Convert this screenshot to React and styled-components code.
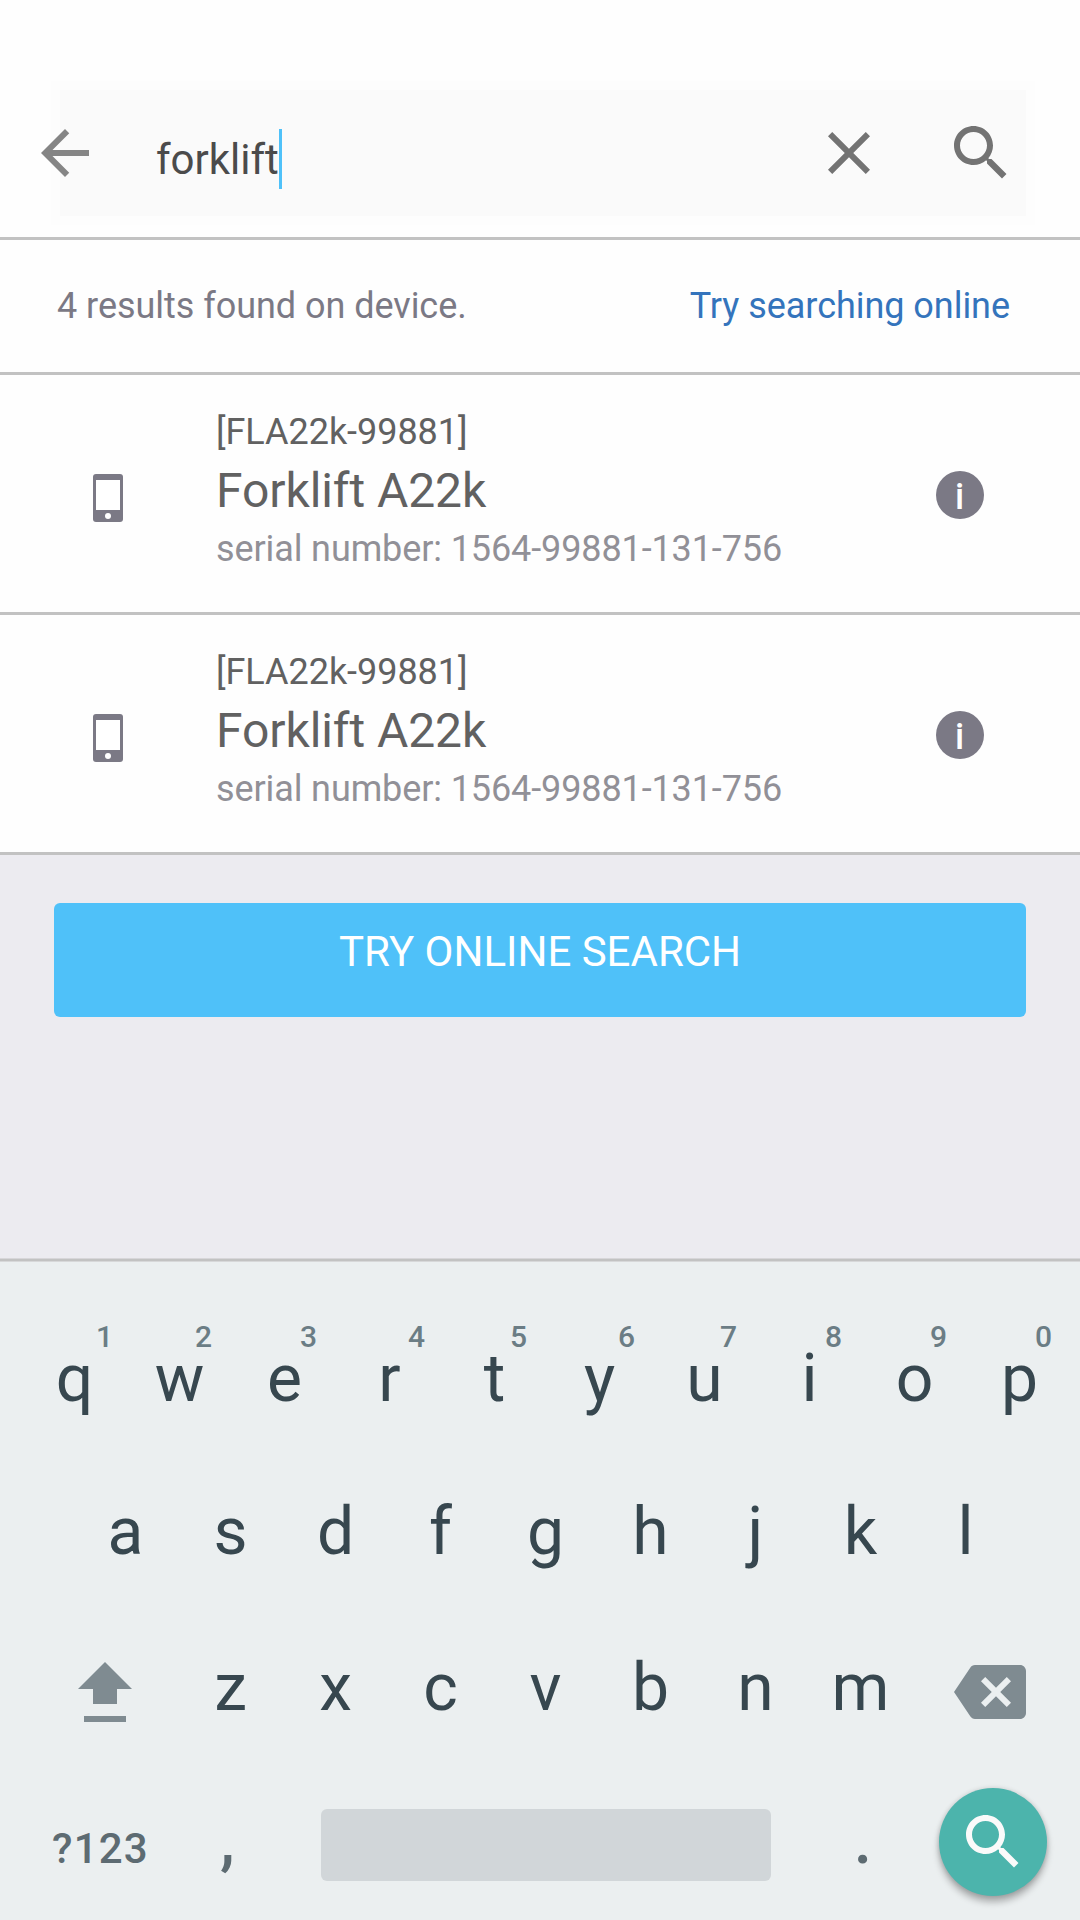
import React from "react";
import styled, { createGlobalStyle } from "styled-components";

const GlobalStyle = createGlobalStyle`
  *, *::before, *::after { box-sizing: border-box; }
  body { margin: 0; background: #fff; }
  button { border: 0; padding: 0; margin: 0; background: none; font: inherit; color: inherit; }
`;

const Screen = styled.main`
  display: flex;
  flex-direction: column;
  width: 1080px;
  height: 1920px;
  overflow: hidden;
  background: #fefefe;
  font-family: Roboto, "Noto Sans", sans-serif;
`;

const Header = styled.header`
  height: 240px;
  padding: 90px 54px 0 60px;
  border-bottom: 3px solid #c2c2c2;
`;

const SearchBar = styled.div`
  display: flex;
  align-items: flex-start;
  height: 126px;
  padding: 27px 9px 0 0;
  background: #fafafa;
  box-shadow: 0 0 0 9px #fdfdfd;
`;

const Icon = styled.svg`
  display: block;
  flex: none;
  width: 72px;
  height: 72px;
  fill: ${(p) => p.$color};
`;

const BackButton = styled.button`
  margin-left: -31px;
`;

const Query = styled.div`
  display: flex;
  flex: 1;
  margin: 12px 0 0 55px;
  font-size: 42px;
  line-height: 61px;
  color: #4b4b4b;
`;

const Caret = styled.span`
  width: 3px;
  height: 60px;
  background: #4fc1f9;
`;

const SearchActions = styled.div`
  display: flex;
  gap: 60px;
`;

const Summary = styled.div`
  display: flex;
  align-items: center;
  justify-content: space-between;
  height: 135px;
  padding: 0 70px 0 57px;
  border-bottom: 3px solid #c2c2c2;
  font-size: 36px;
  line-height: 42px;
  letter-spacing: -0.04px;
  color: #7b7985;
`;

const OnlineLink = styled.a`
  color: #3474bc;
`;

const Result = styled.article`
  display: flex;
  align-items: flex-start;
  height: 240px;
  padding: 36px 96px 0 93px;
  border-bottom: 3px solid #c2c2c2;
`;

const PhoneIcon = styled.svg`
  display: block;
  flex: none;
  width: 30px;
  height: 48px;
  margin-top: 63px;
`;

const ResultText = styled.div`
  display: flex;
  flex: 1;
  flex-direction: column;
  gap: 9px;
  margin-left: 93px;
  font-size: 36px;
  line-height: 42px;
`;

const Code = styled.div`
  letter-spacing: -0.04px;
  color: #616161;
`;

const Title = styled.div`
  font-size: 48px;
  line-height: 57px;
  letter-spacing: -0.08px;
  color: #616161;
`;

const Serial = styled.div`
  letter-spacing: -0.11px;
  color: #919097;
`;

const InfoBadge = styled.button`
  flex: none;
  width: 48px;
  height: 48px;
  margin-top: 60px;
  padding: 4px 1px 0 0;
  border-radius: 50%;
  background: #7b7985;
  color: #fff;
  font-size: 36px;
  font-weight: 500;
  line-height: 42px;
  text-align: center;
`;

const Footer = styled.section`
  height: 403px;
  padding: 48px 54px 0;
  background: #ecebf0;
`;

const OnlineButton = styled.button`
  display: block;
  width: 100%;
  height: 114px;
  padding-bottom: 17px;
  border-radius: 6px;
  background: #4fc1f9;
  color: #fff;
  font-size: 42px;
  line-height: 49px;
`;

const Keyboard = styled.section`
  height: 662px;
  padding-top: 44px;
  background:
    linear-gradient(#d7d6d9 0 1px, #c2c2c2 1px 3px, #d7d8d9 3px 4px) top / 100% 4px no-repeat,
    #ebeff0;
  color: #37474f;
`;

const KeyRow = styled.div`
  display: flex;
  align-items: center;
  height: ${(p) => p.$height}px;
  padding-left: ${(p) => p.$inset}px;
`;

const Key = styled.button`
  position: relative;
  flex: none;
  width: 105px;
  font-size: 66px;
  line-height: 77px;
  text-align: center;
`;

const Hint = styled.span`
  position: absolute;
  top: -21px;
  left: calc(50% + ${(p) => p.$offset}px);
  width: 18px;
  font-size: 30px;
  font-weight: 500;
  line-height: 35px;
  color: #6b7d85;
`;

const ShiftIcon = styled.svg`
  display: block;
  flex: none;
  width: 54px;
  height: 60px;
  margin: 9px 46px 0 0;
  fill: #7f8b91;
`;

const DeleteKey = styled.button`
  margin: 9px 0 0 41px;
`;

const BottomRow = styled.div`
  display: grid;
  grid-template-columns: 174px 147px 450px 168px 108px;
  align-items: start;
  height: 153px;
  color: #5d6b72;
  font-weight: 500;
`;

const SymbolsKey = styled.button`
  padding: 57px 0 0 52px;
  font-size: 42px;
  font-weight: 500;
  line-height: 49px;
  letter-spacing: 1.2px;
  text-align: left;
`;

const PunctuationKey = styled.button`
  padding: 35px ${(p) => p.$right || 0}px 0 ${(p) => p.$left || 0}px;
  font-size: 66px;
  font-weight: 500;
  line-height: 77px;
`;

const SpaceKey = styled.button`
  height: 72px;
  margin-top: 42px;
  border-radius: 6px;
  background: #d1d6d9;
`;

const SearchKey = styled.button`
  display: grid;
  place-items: center;
  width: 108px;
  height: 108px;
  margin-top: 21px;
  border-radius: 50%;
  background: #4cb4ac;
  box-shadow: 0 6px 7px rgba(0, 0, 0, 0.28), 0 0 5px rgba(0, 0, 0, 0.14);
`;

const paths = {
  back: "M20 11H7.83l5.59-5.59L12 4l-8 8 8 8 1.41-1.41L7.83 13H20v-2z",
  close: "M19 6.41L17.59 5 12 10.59 6.41 5 5 6.41 10.59 12 5 17.59 6.41 19 12 13.41 17.59 19 19 17.59 13.41 12z",
  search:
    "M15.5 14h-.79l-.28-.27C15.41 12.59 16 11.11 16 9.5 16 5.91 13.09 3 9.5 3S3 5.91 3 9.5 5.91 16 9.5 16c1.61 0 3.09-.59 4.23-1.57l.27.28v.79l5 4.99L20.49 19l-4.99-5zm-6 0C7.01 14 5 11.99 5 9.5S7.01 5 9.5 5 14 7.01 14 9.5 11.99 14 9.5 14z",
  backspace:
    "M22 3H7c-.69 0-1.23.35-1.59.88L0 12l5.41 8.11c.36.53.9.89 1.59.89h15c1.1 0 2-.9 2-2V5c0-1.1-.9-2-2-2zm-3 12.59L17.59 17 14 13.41 10.41 17 9 15.59 12.59 12 9 8.41 10.41 7 14 10.59 17.59 7 19 8.41 15.41 12 19 15.59z",
};

function Glyph({ name, color }) {
  return (
    <Icon viewBox="0 0 24 24" $color={color} aria-hidden="true">
      <path d={paths[name]} />
    </Icon>
  );
}

const results = [
  { id: 1, code: "[FLA22k-99881]", title: "Forklift A22k", serial: "1564-99881-131-756" },
  { id: 2, code: "[FLA22k-99881]", title: "Forklift A22k", serial: "1564-99881-131-756" },
];

const topKeys = [
  { letter: "q", hint: "1", offset: 21 },
  { letter: "w", hint: "2", offset: 15 },
  { letter: "e", hint: "3", offset: 15 },
  { letter: "r", hint: "4", offset: 18 },
  { letter: "t", hint: "5", offset: 15 },
  { letter: "y", hint: "6", offset: 18 },
  { letter: "u", hint: "7", offset: 15 },
  { letter: "i", hint: "8", offset: 15 },
  { letter: "o", hint: "9", offset: 15 },
  { letter: "p", hint: "0", offset: 15 },
];

function ResultRow({ item }) {
  return (
    <Result>
      <PhoneIcon viewBox="0 0 30 48" aria-hidden="true">
        <rect width="30" height="48" rx="3" fill="#7b7985" />
        <rect x="3" y="6" width="24" height="30" fill="#fff" />
        <circle cx="15" cy="42" r="3" fill="#fff" />
      </PhoneIcon>
      <ResultText>
        <Code>{item.code}</Code>
        <Title>{item.title}</Title>
        <Serial>serial number: {item.serial}</Serial>
      </ResultText>
      <InfoBadge>i</InfoBadge>
    </Result>
  );
}

export default function App() {
  return (
    <>
      <GlobalStyle />
      <Screen>
        <Header>
          <SearchBar>
            <BackButton aria-label="Back">
              <Glyph name="back" color="#858585" />
            </BackButton>
            <Query>
              <span>forklift</span>
              <Caret />
            </Query>
            <SearchActions>
              <Glyph name="close" color="#737373" />
              <Glyph name="search" color="#737373" />
            </SearchActions>
          </SearchBar>
        </Header>
        <Summary>
          <span>4 results found on device.</span>
          <OnlineLink>Try searching online</OnlineLink>
        </Summary>
        {results.map((item) => (
          <ResultRow key={item.id} item={item} />
        ))}
        <Footer>
          <OnlineButton>TRY ONLINE SEARCH</OnlineButton>
        </Footer>
        <Keyboard>
          <KeyRow $height={153} $inset={22}>
            {topKeys.map((k) => (
              <Key key={k.letter}>
                {k.letter}
                <Hint $offset={k.offset}>{k.hint}</Hint>
              </Key>
            ))}
          </KeyRow>
          <KeyRow $height={153} $inset={73}>
            {[..."asdfghjkl"].map((c) => (
              <Key key={c}>{c}</Key>
            ))}
          </KeyRow>
          <KeyRow $height={159} $inset={78}>
            <ShiftIcon viewBox="0 0 54 60" aria-hidden="true">
              <path d="M27 0L54 27H39V42H15V27H0zM6 54H48V60H6z" />
            </ShiftIcon>
            {[..."zxcvbnm"].map((c) => (
              <Key key={c}>{c}</Key>
            ))}
            <DeleteKey aria-label="Delete">
              <Glyph name="backspace" color="#7f8b91" />
            </DeleteKey>
          </KeyRow>
          <BottomRow>
            <SymbolsKey>?123</SymbolsKey>
            <PunctuationKey $right={40}>,</PunctuationKey>
            <SpaceKey aria-label="Space" />
            <PunctuationKey $left={16}>.</PunctuationKey>
            <SearchKey aria-label="Search">
              <Glyph name="search" color="#fafafa" />
            </SearchKey>
          </BottomRow>
        </Keyboard>
      </Screen>
    </>
  );
}
